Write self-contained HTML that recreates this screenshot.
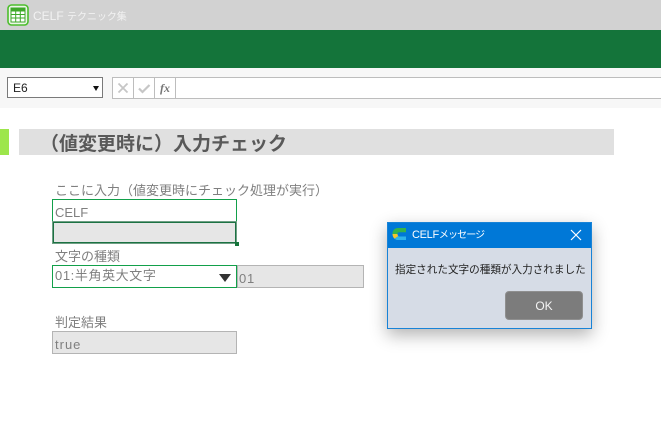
<!DOCTYPE html>
<html lang="ja"><head><meta charset="utf-8">
<style>
html,body{margin:0;padding:0;background:#fff}
body{width:661px;height:424px;position:relative;overflow:hidden;font-family:"Liberation Sans","Noto Sans CJK JP",sans-serif;color:#7f7f7f}
.a{position:absolute;box-sizing:border-box;white-space:nowrap}
</style></head><body>
<div class="a" style="left:0;top:0;width:661px;height:30px;background:#d2d2d2"></div>
<svg class="a" style="left:7px;top:4px" width="22" height="22" viewBox="0 0 22 22">
<rect x="1" y="1" width="20" height="20" rx="3.5" fill="#eef5ea" stroke="#4cbe2c" stroke-width="1.6"/>
<rect x="4" y="4" width="14" height="14" fill="#fff" stroke="#3fa92a"/>
<rect x="4" y="4" width="14" height="3.5" fill="#3fa92a"/>
<path d="M8.7 7v11M13.3 7v11M4 10.5h14M4 14h14" stroke="#3fa92a" fill="none"/>
</svg>
<div class="a" style="left:33px;top:9px;font-size:12px;line-height:15px;color:#f2f2f2">CELF <span style="font-size:10px;letter-spacing:-.05px">テクニック集</span></div>
<div class="a" style="left:0;top:30px;width:661px;height:38px;background:#14743a"></div>
<div class="a" style="left:0;top:68px;width:661px;height:40px;background:#f7f7f7"></div>

<div class="a" style="left:7px;top:77px;width:96px;height:21px;background:#fff;border:1px solid #7a7a7a;color:#222;font-size:12px;line-height:20px;padding-left:5px">E6</div>
<div class="a" style="left:93px;top:86px;width:0;height:0;border-left:3.5px solid transparent;border-right:3.5px solid transparent;border-top:5px solid #111"></div>

<div class="a" style="left:112px;top:77px;width:549px;height:22px;background:#fff;border:1px solid #bdbdbd;border-right:0"></div>
<div class="a" style="left:133px;top:78px;width:1px;height:20px;background:#bdbdbd"></div>
<div class="a" style="left:154px;top:78px;width:1px;height:20px;background:#bdbdbd"></div>
<div class="a" style="left:175px;top:78px;width:1px;height:20px;background:#bdbdbd"></div>
<svg class="a" style="left:113px;top:78px" width="62" height="20" viewBox="0 0 62 20">
<path d="M5.500 5.500l9 9M14.500 5.500l-9 9" stroke="#c6c6c6" stroke-width="1.800" fill="none"/>
<path d="M26 10.500l3.500 3.500 7-7" stroke="#c6c6c6" stroke-width="2.200" fill="none"/>
<text x="47" y="14" font-family="Liberation Serif,serif" font-style="italic" font-weight="bold" font-size="12" fill="#777">fx</text>
</svg>

<div class="a" style="left:0;top:129px;width:9px;height:26px;background:#9de64b"></div>
<div class="a" style="left:19px;top:129px;width:595px;height:26px;background:#e0e0e0"></div>
<div class="a" style="left:40px;top:132px;font-size:19px;line-height:26px;font-weight:bold;color:#595959">（値変更時に）入力チェック</div>

<div class="a" style="left:55px;top:182px;font-size:13px;line-height:17px;color:#7f7f7f">ここに入力（値変更時にチェック処理が実行）</div>
<div class="a" style="left:52px;top:199px;width:185px;height:23px;background:#fff;border:1px solid #12a04a;font-size:13px;line-height:25px;padding-left:2px">CELF</div>
<div class="a" style="left:52px;top:221px;width:185px;height:23px;background:#e6e6e6;border:1px solid #6f9f84;box-shadow:inset 0 0 0 1px #1c7243"></div>
<div class="a" style="left:235px;top:242px;width:4px;height:4px;background:#14743a;border:0"></div>

<div class="a" style="left:55px;top:248px;font-size:13px;line-height:17px">文字の種類</div>
<div class="a" style="left:52px;top:265px;width:185px;height:23px;background:#fff;border:1px solid #12a04a;font-size:13px;line-height:19px;padding-left:2px;letter-spacing:.6px">01:半角英大文字</div>
<div class="a" style="left:219px;top:274px;width:0;height:0;border-left:6px solid transparent;border-right:6px solid transparent;border-top:8px solid #333"></div>
<div class="a" style="left:237px;top:265px;width:127px;height:23px;background:#e6e6e6;border:1px solid #b4b4b4;font-size:13px;line-height:25px;padding-left:1px;letter-spacing:.8px">01</div>

<div class="a" style="left:55px;top:314px;font-size:13px;line-height:17px">判定結果</div>
<div class="a" style="left:52px;top:331px;width:185px;height:23px;background:#e6e6e6;border:1px solid #b4b4b4;font-size:13px;line-height:25px;padding-left:2px;letter-spacing:1px">true</div>

<div class="a" style="left:387px;top:222px;width:205px;height:107px;background:#d6dce6;border:1px solid #1883d7;box-shadow:0 6px 16px rgba(0,0,0,.3)"></div>
<div class="a" style="left:388px;top:223px;width:203px;height:25px;background:#0078d7"></div>
<svg class="a" style="left:391px;top:226px" width="16" height="16" viewBox="0 0 16 16">
<path d="M15 2H7C4 2 1.500 4 1.500 8h5c0-1 .5-1.700 1.500-1.700h7z" fill="#35b34a"/>
<path d="M1.500 8c0 2 .8 3.600 2 4.700L7.500 10C6.800 9.700 6.500 9 6.500 8z" fill="#f5c52a"/>
<path d="M3.500 12.700C4.500 13.500 5.700 14 7 14h8v-3.500H8c-.2 0-.4 0-.5-.5z" fill="#2fb4e9"/>
</svg>
<div class="a" style="left:412px;top:227px;font-size:11px;line-height:16px;color:#fff;letter-spacing:-.3px">CELF<span style="font-size:10px;letter-spacing:-.9px">メッセージ</span></div>
<svg class="a" style="left:570px;top:229px" width="12" height="12" viewBox="0 0 12 12"><path d="M1 1l10 10M11 1L1 11" stroke="#fff" stroke-width="1.200" fill="none"/></svg>
<div class="a" style="left:395px;top:262px;font-size:10.600px;line-height:16px;color:#222">指定された文字の種類が入力されました</div>
<div class="a" style="left:505px;top:291px;width:78px;height:29px;background:#7c7c7c;border:1px solid #8f8f8f;border-radius:4px;color:#f4f4f4;font-size:12px;line-height:28px;text-align:center">OK</div>
</body></html>
